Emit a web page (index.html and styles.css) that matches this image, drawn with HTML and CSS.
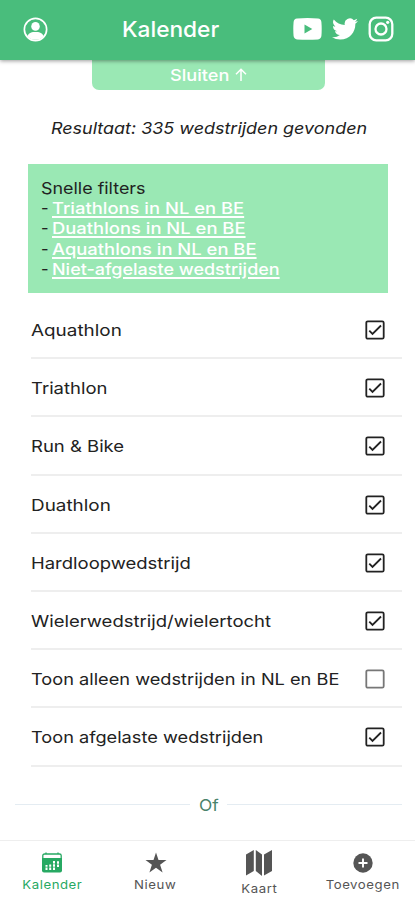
FILE: index.html
```html
<!DOCTYPE html>
<html lang="nl">
<head>
<meta charset="utf-8">
<meta name="viewport" content="width=device-width, initial-scale=1">
<title>Kalender</title>
<link rel="stylesheet" href="styles.css">
</head>
<body>
<header class="topbar">
  <svg class="user" viewBox="0 0 24 24"><circle cx="12" cy="12" r="10.7" fill="none" stroke="#fff" stroke-width="1.6"/><circle cx="12" cy="9" r="4.1" fill="#fff"/><path d="M4.2 18.5C5.4 14.8 9 14.4 12 14.4s6.600.4 7.800 4.100A10.700 10.700 0 0 1 4.200 18.500Z" fill="#fff"/></svg>
  <h1><span class="t">Kalender</span></h1>
  <div class="social">
    <svg width="29" height="22" viewBox="0 0 29 22"><path fill="#fff" fill-rule="evenodd" d="M4 .5Q14.500-.3 25 .5 28 .8 28.400 4 29 11 28.400 18 28 21 25 21.400 14.500 22.200 4 21.400 1 21 .6 18 0 11 .6 4 1 .8 4 .5ZM11.500 6.500v9l7.800-4.500Z"/></svg>
    <svg width="26" height="22" viewBox="0 0 24 20"><path fill="#fff" d="M23.950 2.570a10 10 0 0 1-2.820.77 4.960 4.960 0 0 0 2.160-2.720 9.900 9.900 0 0 1-3.120 1.190 4.920 4.920 0 0 0-8.380 4.480A13.930 13.930 0 0 1 1.640 1.160a4.920 4.920 0 0 0 1.520 6.570 4.900 4.900 0 0 1-2.230-.61v.06a4.920 4.920 0 0 0 3.950 4.830 5 5 0 0 1-2.210.08 4.940 4.940 0 0 0 4.600 3.420A9.870 9.870 0 0 1 0 17.540 13.990 13.990 0 0 0 7.550 19.750c9.050 0 13.990-7.500 13.990-13.990 0-.21 0-.42-.02-.63a9.940 9.940 0 0 0 2.430-2.560Z"/></svg>
    <svg width="26" height="26" viewBox="0 0 26 26" fill="none" stroke="#fff"><rect x="1.700" y="1.700" width="22.600" height="22.600" rx="6.500" stroke-width="2.300"/><circle cx="13" cy="13" r="5.500" stroke-width="2.300"/><circle cx="19.700" cy="6.300" r="1.600" fill="#fff" stroke="none"/></svg>
  </div>
</header>
<div class="close"><span class="t">Sluiten</span><svg width="12" height="14" viewBox="0 0 12 14"><path d="M6 13V1.500M1 6.300 6 1.300l5 5" fill="none" stroke="#fff" stroke-width="1.500"/></svg></div>
<p class="result"><span class="t">Resultaat: 335 wedstrijden gevonden</span></p>
<section class="quick">
  <div><span class="t s-heading">Snelle filters</span></div>
  <div><i>-</i><a class="t">Triathlons in NL en BE</a></div>
  <div><i>-</i><a class="t">Duathlons in NL en BE</a></div>
  <div><i>-</i><a class="t">Aquathlons in NL en BE</a></div>
  <div><i>-</i><a class="t s-niet">Niet-afgelaste wedstrijden</a></div>
</section>
<main class="list">
  <div class="row"><span class="t s-wide">Aquathlon</span><svg class="box" viewBox="0 0 20 20"><rect x="1.300" y="1.300" width="17.400" height="17.400" rx="1.500"/><path d="m4.300 10.700 3.200 3.300 8.500-8.500"/></svg></div>
  <div class="row"><span class="t">Triathlon</span><svg class="box" viewBox="0 0 20 20"><rect x="1.300" y="1.300" width="17.400" height="17.400" rx="1.500"/><path d="m4.300 10.700 3.200 3.300 8.500-8.500"/></svg></div>
  <div class="row"><span class="t">Run &amp; Bike</span><svg class="box" viewBox="0 0 20 20"><rect x="1.300" y="1.300" width="17.400" height="17.400" rx="1.500"/><path d="m4.300 10.700 3.200 3.300 8.500-8.500"/></svg></div>
  <div class="row"><span class="t s-wide">Duathlon</span><svg class="box" viewBox="0 0 20 20"><rect x="1.300" y="1.300" width="17.400" height="17.400" rx="1.500"/><path d="m4.300 10.700 3.200 3.300 8.500-8.500"/></svg></div>
  <div class="row"><span class="t">Hardloopwedstrijd</span><svg class="box" viewBox="0 0 20 20"><rect x="1.300" y="1.300" width="17.400" height="17.400" rx="1.500"/><path d="m4.300 10.700 3.200 3.300 8.500-8.500"/></svg></div>
  <div class="row"><span class="t">Wielerwedstrijd/wielertocht</span><svg class="box" viewBox="0 0 20 20"><rect x="1.300" y="1.300" width="17.400" height="17.400" rx="1.500"/><path d="m4.300 10.700 3.200 3.300 8.500-8.500"/></svg></div>
  <div class="row"><span class="t s-tight">Toon alleen wedstrijden in NL en BE</span><svg class="box off" viewBox="0 0 20 20"><rect x="1.300" y="1.300" width="17.400" height="17.400" rx="1.500"/></svg></div>
  <div class="row"><span class="t s-tight">Toon afgelaste wedstrijden</span><svg class="box" viewBox="0 0 20 20"><rect x="1.300" y="1.300" width="17.400" height="17.400" rx="1.500"/><path d="m4.300 10.700 3.200 3.300 8.500-8.500"/></svg></div>
</main>
<div class="or"><span class="t">Of</span></div>
<nav class="tabs">
  <div class="tab active"><svg width="22" height="22" viewBox="0 0 22 22"><path fill="none" stroke="currentColor" stroke-width="1.300" d="M1.800 6V3.500Q1.800 2 3.500 2h15q1.700 0 1.700 1.500V6M5 .5v2M17 .5v2"/><path fill="currentColor" d="M1 6h20v12.500q0 2-2 2H3q-2 0-2-2Z"/><path stroke="#fff" stroke-width="2" stroke-dasharray="2.600 .6" d="M5.500 18v-5M9.200 18v-5.500M13 18V8.500M17 15V8.500"/></svg><span class="t">Kalender</span></div>
  <div class="tab"><svg width="22" height="22" viewBox="0 0 22 22"><path fill="currentColor" d="m11 .5 2.500 7.600h8l-6.400 4.700 2.500 7.700-6.600-4.700-6.600 4.700 2.500-7.700L.5 8.100h8Z"/></svg><span class="t">Nieuw</span></div>
  <div class="tab map"><svg width="28" height="28" viewBox="0 0 28 28"><path fill="currentColor" d="M1 5.500 8.800 1v21L1 26.500ZM10.800 1l6.200 4.500v21.500l-6.200-5ZM19 5.500 27 1v21l-8 4.500Z"/></svg><span class="t">Kaart</span></div>
  <div class="tab"><svg width="22" height="22" viewBox="0 0 22 22"><circle cx="11" cy="11" r="9.700" fill="currentColor"/><path d="M11 6.500v9M6.500 11h9" stroke="#fff" stroke-width="1.900"/></svg><span class="t">Toevoegen</span></div>
</nav>
</body>
</html>
```
FILE: styles.css
```css
* { box-sizing: border-box; }
body { margin: 0; height: 900px; overflow: hidden; display: flex; flex-direction: column; background: #fff; color: #222; font: 16.5px/20px Inter, "Liberation Sans", sans-serif; }
svg { display: block; flex: none; }
.t { display: inline-block; transform: scaleX(1.12); transform-origin: left center; white-space: nowrap; }
.topbar { flex: none; height: 60px; background: #49bd7c; box-shadow: 0 1px 4px #0006; display: grid; grid-template-columns: 122px 1fr auto; align-items: center; padding: 0 21px 2px 0; z-index: 1; color: #fff; }
.user { width: 25px; height: 25px; margin-left: 23px; }
h1 { margin: 0; font-size: 22px; font-weight: 500; line-height: 28px; }
h1 .t { transform: scaleX(1.03); }
.social { display: flex; align-items: center; gap: 10px; }
.close { flex: none; width: 233px; height: 30px; margin-left: 92px; background: #9ae8b4; border-radius: 0 0 7px 7px; display: flex; align-items: center; justify-content: center; gap: 11px; color: #fff; font-weight: 500; }
.close .t { transform: scaleX(1.1); }
.result { flex: none; margin: 28px 0 0 51px; font-style: italic; }
.result .t { transform: scaleX(1.088); }
.quick { flex: none; margin: 26px 27px 0 28px; height: 129px; padding: 14px 13px; background: #9ae8b4; }
.quick div { height: 20.200px; display: flex; }
.quick i { width: 11px; font-style: normal; }
.quick a { color: #fff; font-weight: 500; text-decoration: underline; text-decoration-thickness: 1.500px; text-underline-offset: 2px; }
.quick .t { transform: scaleX(1.115); }
.quick .s-heading { transform: scaleX(1.085); }
.quick .s-niet { transform: scaleX(1.09); }
.list { flex: none; margin: 8px 13px 0 31px; }
.row { height: 58.200px; display: flex; align-items: center; justify-content: space-between; border-bottom: 2px solid #eee; padding: 2px 17px 0 0; }
.row .s-wide { transform: scaleX(1.145); }
.row .s-tight { transform: scaleX(1.103); }
.box { width: 20px; height: 20px; fill: none; stroke: #222; stroke-width: 1.800; }
.off { stroke: #777; }
.or { display: flex; align-items: center; gap: 9px; margin: 28px 13px 0 15px; color: #49836b; }
.or .t { transform: scaleX(1.05); }
.or::before, .or::after { content: ""; height: 1px; flex: 1; background: #e4ecf2; }
.tabs { margin-top: auto; flex: none; height: 60px; border-top: 1px solid #eee; display: grid; grid-template-columns: repeat(4, 1fr); color: #555; font-size: 12px; line-height: 16px; }
.tab { display: flex; flex-direction: column; align-items: center; padding-top: 11px; }
.tab .t { transform: scaleX(1.1); transform-origin: center; margin-top: 3px; letter-spacing: .5px; }
.tab.map { padding-top: 8px; }
.tab.map .t { margin-top: 4px; }
.active { color: #27a963; }
```
